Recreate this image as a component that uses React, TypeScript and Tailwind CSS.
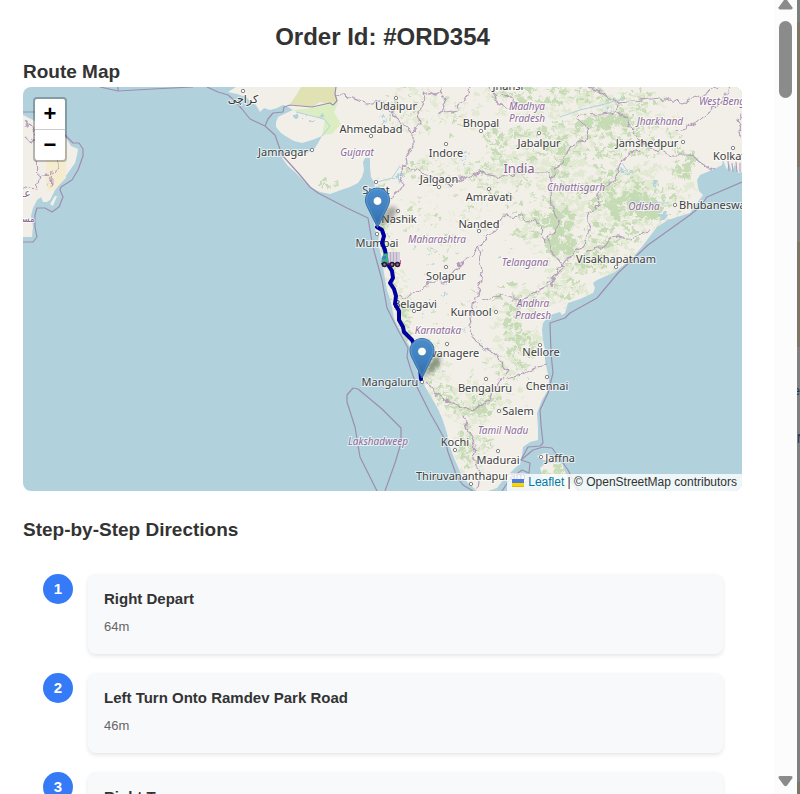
import React from "react";

type Pt = [number, number];
type Anchor = "start" | "middle" | "end";

/* ---------- Map geometry ---------- */

const INDIA =
  "M236 87L228 92L237 94L246 97L250 101L256 105L260 112L264 108L270 110L277 108L283 105L288 107L293 110L284 114L278 117L276 122L276 127L281 133L287 137L294 141L302 143L309 141L315 139L322 136L318 143L315 148L307 153L298 152L290 154L284 155L282 158L288 166L295 172L303 180L310 187L320 192L330 194L341 190L350 187L358 183L362 177L364 170L363 162L365 158L370 158L370 168L371 177L374 182L375 188L371 192L373 200L371 206L373 213L374 222L375 230L379 236L378 243L381 255L383 267L385 279L387 290L390 299L392 307L394 318L398 327L404 337L410 347L414 358L417 370L423 383L430 395L437 407L442 418L445 427L448 437L450 447L454 458L458 467L462 476L467 482L477 491L488 491L497 488L503 480L510 473L515 468L520 464L521 459L522 455L523 447L530 442L538 440L538 428L537 413L542 400L548 390L549 380L547 370L545 360L545 350L543 340L542 330L543 323L550 315L560 312L562 315L565 313L568 303L580 299L593 293L595 288L593 283L597 280L615 272L625 264L633 257L640 249L647 240L657 227L668 220L677 217L690 213L697 203L703 195L699 191L698 187L697 180L700 175L712 170L722 165L723 160L727 170L729 163L732 172L735 164L738 173L742 172L742 87Z";

const OMAN =
  "M23 115L33 120L43 127L58 133L66 138L71 146L78 149L77 155L75 163L70 170L63 180L55 190L50 200L47 202L43 202L41 197L37 200L33 208L31 216L33 226L32 237L23 237Z";

const MARINE = [
  "M100 87L118 91L153 89L193 87",
  "M118 87L118 91",
  "M207 87L218 92L228 95L235 101L242 109L250 119L265 126L275 135L282 155L300 175L310 187L318 193L347 208L368 218L370 230L373 247L377 262L382 280L387 308L398 330L408 348L407 357L411 370L417 387L430 413L438 427L445 440L448 452L452 463L457 477L463 485L473 491",
  "M265 126L268 119L273 113L283 112L284 107L290 105L312 107L330 103L333 105L337 101L335 94L336 87",
  "M742 182L707 197L700 207L690 215L648 245L618 273L597 298L570 313L565 318L550 323L551 353L553 373L548 393L540 410L541 425L543 443L540 446L528 447L521 460L530 463L529 473L522 470L510 479L502 491",
  "M521 460L533 450L543 447L552 448L557 455L563 463L568 470L573 480L579 491",
  "M353 388L347 395L347 402L355 427L360 457L377 491",
  "M353 388L358 389L382 409L401 428L401 443L395 463L385 491",
  "M23 112L36 112L65 135L73 143L79 143L83 149L83 156L78 170L72 180L61 187L60 190L63 197L59 207L52 212L45 208L37 208L35 215L35 227L37 237L33 242L23 242",
];

const STATES = [
  "M335 95L350 97L365 103L380 100L392 113L402 123L413 133L413 145L405 155L407 163L400 168L403 180L400 190L392 197L380 203",
  "M413 133L420 125L418 113L425 100L422 92L430 95L440 90L447 103L440 113L455 110L465 100L470 87",
  "M400 165L420 173L437 178L450 185L465 178L480 172L500 178L520 172L545 172L553 178",
  "M553 178L560 163L570 148L585 140L590 128L578 120L580 114L600 115L617 113L620 103L610 98L600 92L590 87",
  "M617 113L627 118L632 130L640 140L655 150L670 155L690 155L700 162L712 170",
  "M620 103L640 100L660 98L680 102L700 95L720 87",
  "M675 130L685 128L700 120L715 108L725 95L730 87",
  "M742 115L738 118L741 125L737 131L742 137",
  "M640 150L632 152L620 163L615 180L600 190L597 210L585 213L590 230L585 245L570 255L558 270L550 285",
  "M553 178L550 195L555 215L560 225L548 238L552 252L565 268",
  "M490 237L503 215L520 217L540 225L545 240",
  "M585 253L600 248L618 235L632 238L648 232",
  "M400 297L415 293L430 282L445 283L455 270L465 260L478 248L490 237",
  "M478 250L482 280L475 300L470 315L472 335L480 345L495 355L508 370L500 380",
  "M482 300L500 295L520 300L540 290L550 280L565 268",
  "M500 380L508 378L520 375L535 368L547 365",
  "M425 383L440 395L455 405L475 410L490 400L500 380",
  "M463 415L468 430L475 445L473 460L480 475L478 490",
  "M500 97L510 95L516 105L508 110L496 100L490 87",
  "M23 122L33 128L36 137L31 143L25 136M36 137L40 125M37 137L39 178L36 188L23 185M39 178L47 176L51 182L50 187M59 150L59 168L52 171L50 187",
];

/* [centre x, centre y, radius x, radius y, number of patches, patch size] */
const WOODS: number[][] = [
  [382, 190, 8, 14, 14, 3],
  [385, 240, 5, 24, 22, 3],
  [393, 290, 5, 24, 22, 3],
  [404, 325, 7, 20, 34, 4],
  [427, 364, 12, 20, 46, 5],
  [445, 396, 10, 12, 26, 4],
  [465, 408, 18, 9, 40, 4],
  [486, 404, 13, 14, 36, 4],
  [466, 446, 6, 22, 36, 4],
  [484, 445, 12, 10, 26, 3],
  [328, 184, 9, 5, 12, 4],
  [400, 105, 16, 24, 26, 3],
  [440, 120, 26, 24, 22, 3],
  [450, 170, 48, 14, 50, 3],
  [500, 180, 34, 20, 50, 3],
  [520, 145, 46, 18, 74, 4],
  [550, 95, 60, 10, 64, 5],
  [605, 121, 27, 7, 62, 6],
  [560, 140, 26, 18, 50, 4],
  [600, 150, 22, 18, 40, 4],
  [562, 165, 9, 30, 40, 5],
  [560, 230, 15, 27, 96, 6],
  [530, 215, 30, 24, 46, 4],
  [596, 195, 18, 15, 42, 4],
  [634, 209, 26, 17, 110, 6],
  [622, 180, 24, 14, 40, 4],
  [610, 235, 30, 15, 60, 4],
  [655, 205, 30, 24, 70, 4],
  [685, 166, 11, 16, 40, 5],
  [650, 142, 34, 18, 60, 4],
  [630, 100, 32, 12, 40, 4],
  [585, 262, 22, 13, 46, 4],
  [558, 288, 24, 12, 30, 4],
  [513, 328, 8, 28, 58, 4],
  [524, 350, 14, 20, 40, 4],
  [520, 295, 26, 12, 24, 4],
  [500, 372, 34, 18, 30, 3],
  [440, 225, 40, 34, 32, 3],
  [455, 300, 50, 50, 30, 2],
  [555, 480, 16, 14, 40, 4],
];

/* Pale scrub that surrounds the denser woods. */
const SCRUB: number[][] = [
  [530, 110, 75, 26, 150, 5],
  [480, 172, 80, 20, 150, 4],
  [540, 160, 50, 34, 130, 5],
  [620, 120, 70, 30, 150, 5],
  [600, 180, 60, 40, 190, 5],
  [650, 200, 50, 34, 150, 5],
  [565, 235, 50, 44, 190, 5],
  [600, 255, 36, 22, 90, 5],
  [515, 330, 26, 46, 150, 5],
  [560, 295, 38, 14, 70, 5],
  [385, 240, 9, 50, 60, 4],
  [400, 310, 11, 40, 70, 4],
  [430, 370, 20, 28, 90, 5],
  [470, 405, 36, 18, 110, 4],
  [473, 448, 18, 34, 100, 4],
  [415, 110, 34, 26, 90, 4],
  [445, 215, 50, 30, 90, 3],
  [500, 385, 36, 30, 70, 4],
  [558, 478, 20, 14, 40, 4],
];

const WATER: number[][] = [
  [384, 116, 5, 9, 6, 3],
  [465, 156, 6, 10, 8, 3],
  [398, 178, 7, 5, 8, 3],
  [312, 118, 20, 4, 8, 3],
  [605, 110, 8, 4, 6, 3],
  [627, 171, 6, 4, 7, 3],
  [656, 185, 4, 3, 6, 3],
  [427, 252, 16, 14, 9, 2],
  [505, 250, 40, 30, 12, 2],
  [455, 300, 40, 30, 14, 2],
  [480, 345, 50, 40, 12, 2],
  [663, 216, 5, 3, 7, 4],
];

/* Small deterministic generator so that the terrain is the same on each load. */
function makeRandom(seed: number) {
  let s = seed;
  return () => {
    s = (s * 16807) % 2147483647;
    return s / 2147483647;
  };
}

function scatter(clusters: number[][], seed: number): string {
  const rnd = makeRandom(seed);
  let d = "";
  for (const [cx, cy, rx, ry, count, size] of clusters) {
    for (let i = 0; i < count; i++) {
      const a = rnd() * Math.PI * 2;
      const r = Math.sqrt(rnd());
      const x = cx + Math.cos(a) * r * rx;
      const y = cy + Math.sin(a) * r * ry;
      const w = size * (0.3 + rnd() * 0.8);
      const pts: Pt[] = [];
      for (let k = 0; k < 6; k++) {
        const t = (k / 6) * Math.PI * 2;
        const q = w * (0.3 + rnd() * 0.8);
        pts.push([x + Math.cos(t) * q, y + Math.sin(t) * q * 0.7]);
      }
      d += "M" + pts.map((p) => p[0].toFixed(1) + " " + p[1].toFixed(1)).join("L") + "Z";
    }
  }
  return d;
}

const WOODS_PATH = scatter(WOODS, 4217);
const SCRUB_PATH = scatter(SCRUB, 5501);
const WATER_PATH = scatter(WATER, 911);

/* ---------- Map labels ---------- */

const CITIES: { t: string; x: number; y: number; a?: Anchor; dot?: Pt }[] = [
  { t: "Udaipur", x: 396, y: 110, dot: [396, 98] },
  { t: "Ahmedabad", x: 371, y: 133, dot: [371, 136] },
  { t: "Jamnagar", x: 283, y: 156, dot: [312, 150] },
  { t: "Bhopal", x: 481, y: 127, dot: [481, 131] },
  { t: "Indore", x: 446, y: 157, dot: [446, 144] },
  { t: "Jalgaon", x: 439, y: 183, dot: [439, 187] },
  { t: "Jhansi", x: 508, y: 90 },
  { t: "Jabalpur", x: 539, y: 147, dot: [539, 133] },
  { t: "Jamshedpur", x: 647, y: 147, dot: [683, 142] },
  { t: "Kolkata", x: 713, y: 160, a: "start", dot: [733, 148] },
  { t: "Amravati", x: 489, y: 201, dot: [489, 189] },
  { t: "Surat", x: 376, y: 194, dot: [376, 182] },
  { t: "Nashik", x: 399, y: 223, dot: [398, 211] },
  { t: "Nanded", x: 479, y: 228, dot: [479, 231] },
  { t: "Mumbai", x: 377, y: 247, dot: [377, 234] },
  { t: "Solapur", x: 446, y: 280, dot: [446, 267] },
  { t: "Belagavi", x: 415, y: 308, dot: [414, 311] },
  { t: "Kurnool", x: 471, y: 316, dot: [496, 312] },
  { t: "Davanagere", x: 448, y: 357, dot: [447, 344] },
  { t: "Mangaluru", x: 390, y: 386, dot: [422, 382] },
  { t: "Bengaluru", x: 485, y: 392, dot: [486, 379] },
  { t: "Nellore", x: 541, y: 356, dot: [540, 345] },
  { t: "Chennai", x: 547, y: 390, dot: [547, 377] },
  { t: "Salem", x: 518, y: 415, dot: [499, 411] },
  { t: "Kochi", x: 455, y: 446, dot: [455, 450] },
  { t: "Madurai", x: 498, y: 464, dot: [498, 451] },
  { t: "Jaffna", x: 560, y: 462, dot: [541, 457] },
  { t: "Thiruvananthapuram", x: 416, y: 480, a: "start", dot: [471, 484] },
  { t: "Visakhapatnam", x: 616, y: 263, dot: [616, 267] },
  { t: "Bhubaneswar", x: 679, y: 209, a: "start", dot: [675, 205] },
];

const REGIONS: { t: string; x: number; y: number; a?: Anchor }[] = [
  { t: "Gujarat", x: 357, y: 156 },
  { t: "Madhya", x: 527, y: 110 },
  { t: "Pradesh", x: 527, y: 122 },
  { t: "Jharkhand", x: 660, y: 125 },
  { t: "West Bengal", x: 699, y: 105, a: "start" },
  { t: "Chhattisgarh", x: 576, y: 191 },
  { t: "Odisha", x: 644, y: 210 },
  { t: "Maharashtra", x: 437, y: 243 },
  { t: "Telangana", x: 525, y: 266 },
  { t: "Andhra", x: 533, y: 307 },
  { t: "Pradesh", x: 533, y: 319 },
  { t: "Karnataka", x: 438, y: 334 },
  { t: "Tamil Nadu", x: 503, y: 434 },
  { t: "Lakshadweep", x: 378, y: 445 },
];

function Marker({ x, y }: { x: number; y: number }) {
  return (
    <g transform={`translate(${x - 12.5} ${y - 41})`}>
      <path d="M13 41L20 24Q26 17 31 20Q33 25 27 31Z" fill="#000" opacity="0.3" filter="url(#soft)" />
      <path
        d="M12.5 0.5C5.8 0.5 0.5 5.8 0.5 12.4C0.5 15.3 1.4 17.6 2.7 20.2L12.5 40L22.3 20.2C23.6 17.6 24.5 15.3 24.5 12.4C24.5 5.8 19.2 0.5 12.5 0.5Z"
        fill="url(#pin)"
        stroke="#3573a8"
      />
      <path
        d="M12.5 1.6C6.4 1.6 1.6 6.4 1.6 12.4C1.6 15.1 2.4 17.2 3.7 19.7L12.5 37.6L21.3 19.7C22.6 17.2 23.4 15.1 23.4 12.4C23.4 6.4 18.6 1.6 12.5 1.6Z"
        fill="none"
        stroke="#fff"
        strokeOpacity="0.14"
      />
      <circle cx="12.5" cy="13.5" r="4.3" fill="#fff" stroke="#2e6c97" strokeWidth="0.6" />
    </g>
  );
}

function Truck() {
  return (
    <g>
      <rect x="388.500" y="252" width="11.500" height="11" fill="#d6cedd" />
      <path d="M390.500 252V263M393.500 252V263M396.500 252V263" stroke="#b9aec6" />
      <path d="M383 255L384.500 253.500H388V263H381.500V259Z" fill="#3fae86" />
      <path d="M383 256H386V259H382Z" fill="#3f7fd0" />
      <path d="M381 263H400V264.500H381Z" fill="#53405c" />
      <path d="M400.500 260V264" stroke="#e0559b" />
      <g fill="#8d7b9b" stroke="#2b1733" strokeWidth="1.500">
        <circle cx="384.500" cy="264.500" r="2" />
        <circle cx="392" cy="264.500" r="2" />
        <circle cx="397.500" cy="264.500" r="2" />
      </g>
    </g>
  );
}

function MapCanvas() {
  return (
    <svg
      className="block h-full w-full"
      viewBox="23 87 719 404"
      preserveAspectRatio="xMidYMid slice"
      role="img"
      aria-label="Route map of southern India"
    >
      <defs>
        <linearGradient id="pin" x1="0" y1="0" x2="0" y2="1">
          <stop offset="0" stopColor="#4a8dcb" />
          <stop offset="0.5" stopColor="#4181c1" />
          <stop offset="1" stopColor="#3069a8" />
        </linearGradient>
        <filter id="soft" x="-30%" y="-30%" width="160%" height="160%">
          <feGaussianBlur stdDeviation="2" />
        </filter>
        <filter id="rough" filterUnits="userSpaceOnUse" x="23" y="87" width="719" height="404">
          <feTurbulence type="fractalNoise" baseFrequency="0.22" numOctaves="2" seed="7" result="noise" />
          <feDisplacementMap
            in="SourceGraphic"
            in2="noise"
            scale="8"
            xChannelSelector="R"
            yChannelSelector="G"
            result="ragged"
          />
          <feGaussianBlur in="ragged" stdDeviation="0.500" />
        </filter>
        <filter id="wobble" filterUnits="userSpaceOnUse" x="23" y="87" width="719" height="404">
          <feTurbulence type="fractalNoise" baseFrequency="0.12" numOctaves="2" seed="3" result="noise" />
          <feDisplacementMap
            in="SourceGraphic"
            in2="noise"
            scale="9"
            xChannelSelector="R"
            yChannelSelector="G"
            result="bent"
          />
          <feGaussianBlur in="bent" stdDeviation="0.350" />
        </filter>
        <clipPath id="land">
          <path d={INDIA} />
          <path d="M540 491L544 480L540 468L546 463L562 463L568 480L577 491Z" />
        </clipPath>
      </defs>

      <rect x="23" y="87" width="719" height="404" fill="#b1d2dd" />

      <g fill="#f2efe9">
        <path d={INDIA} />
        <path d={OMAN} />
        <path d="M540 491L544 480L540 468L546 463L562 463L568 480L577 491Z" />
        <path d="M537 456L544 453L551 456L556 461L548 461L540 459Z" />
        <path d="M50 204L55 196L57 196L53 206Z" />
      </g>
      <path d="M46 152L66 152L66 178L55 189L48 192L46 180Z" fill="#f5ecd0" />

      <g clipPath="url(#land)">
        <path d="M290 104L297 94L301 87H336L335 93L338 101L328 104L320 102L312 107Z" fill="#e0e2b3" />
        <path
          d="M293 110L312 108L330 104L338 103L334 112L341 124L332 134L322 135L325 120L308 114L298 113Z"
          fill="#daeec2"
        />
        <g filter="url(#rough)">
          <path d={SCRUB_PATH} fill="#dbe7cb" opacity="0.7" />
          <path d={WOODS_PATH} fill="#c0d8ae" opacity="0.85" />
          <path d={WATER_PATH} fill="#b1d2dd" />
        </g>
        <path
          d="M322 136L330 126L324 119L308 115L296 112M560 117L580 110L605 104L625 98M400 166L392 178L374 183M630 200L650 203L668 203M628 172L622 163"
          fill="none"
          stroke="#b1d2dd"
        />
      </g>

      <g fill="none" stroke="#b39dba" strokeWidth="1.200" filter="url(#wobble)">
        {STATES.map((d) => (
          <path key={d} d={d} />
        ))}
      </g>
      <g fill="none" stroke="#9c8fae" strokeWidth="1.200" strokeLinejoin="round">
        {MARINE.map((d) => (
          <path key={d} d={d} />
        ))}
      </g>
      <path d="M728 161L729 171M732 163L733 172M736 162L737 172M740 163V172" stroke="#a99ab8" />

      <g fill="#fff" stroke="#777" strokeWidth="0.900">
        {CITIES.filter((c) => c.dot).map((c) => (
          <circle key={c.t} cx={c.dot![0]} cy={c.dot![1]} r="1.700" />
        ))}
        <circle cx="243" cy="91" r="1.700" />
      </g>

      <g
        className="font-['Noto_Sans',sans-serif] text-[11px]"
        fill="#404040"
        stroke="#fff"
        strokeOpacity="0.65"
        strokeWidth="2"
        paintOrder="stroke"
      >
        {CITIES.map((c) => (
          <text key={c.t} x={c.x} y={c.y} textAnchor={c.a ?? "middle"}>
            {c.t}
          </text>
        ))}
      </g>
      <g
        className="font-['Noto_Sans',sans-serif] text-[10px] italic"
        fill="#8d6a9b"
        stroke="#fff"
        strokeOpacity="0.65"
        strokeWidth="2"
        paintOrder="stroke"
      >
        {REGIONS.map((r) => (
          <text key={r.t + r.x} x={r.x} y={r.y} textAnchor={r.a ?? "middle"}>
            {r.t}
          </text>
        ))}
      </g>
      <g stroke="#fff" strokeOpacity="0.65" strokeWidth="2" paintOrder="stroke" textAnchor="middle">
        <text x="519" y="173" fill="#84618f" className="font-['Noto_Sans',sans-serif] text-[13px]">
          India
        </text>
        <text x="243" y="103" fill="#333" className="font-['DejaVu_Sans',sans-serif] text-[11px]">
          کراچی
        </text>
        <text x="26" y="197" fill="#84618f" className="font-['DejaVu_Sans',sans-serif] text-[11px]">
          عـ
        </text>
        <text x="27" y="222" fill="#84618f" className="font-['DejaVu_Sans',sans-serif] text-[9px]">
          مسـ
        </text>
      </g>

      <path
        d="M377 227L382 230L384 236L382 243L385 250L387 263L392 271L393 278L390 283L394 289L396 296L395 304L399 311L399 320L403 327L404 332L412 340L418 352L420 367L421 379"
        fill="none"
        stroke="#00009f"
        strokeWidth="4"
        strokeLinejoin="round"
        strokeLinecap="round"
      />
      <Marker x={377.5} y={228.5} />
      <Marker x={422} y={379} />
      <Truck />
    </svg>
  );
}

function RouteMap() {
  return (
    <div className="relative h-[404px] overflow-hidden rounded-lg">
      <MapCanvas />
      <div className="absolute top-2.5 left-2.5 flex flex-col overflow-hidden rounded-sm border-2 border-black/25 bg-white bg-clip-padding">
        <button
          type="button"
          aria-label="Zoom in"
          className="flex h-[31px] w-[30px] items-center justify-center border-b border-[#ccc] text-[22px] leading-[30px] font-bold text-black"
        >
          +
        </button>
        <button
          type="button"
          aria-label="Zoom out"
          className="flex h-[30px] w-[30px] items-center justify-center text-[22px] leading-[30px] font-bold text-black"
        >
          −
        </button>
      </div>
      <div className="absolute right-0 bottom-0 flex items-center bg-white/80 px-[5px] text-[12px] leading-[17px] text-[#333]">
        <a href="#leaflet" className="flex items-center gap-1 text-[#0078a8]">
          <svg width="12" height="8" viewBox="0 0 12 8" aria-hidden="true">
            <path fill="#4c7be1" d="M0 0h12v4H0z" />
            <path fill="#ffd500" d="M0 4h12v3H0z" />
            <path fill="#e0bc00" d="M0 7h12v1H0z" />
          </svg>
          Leaflet
        </a>
        <span className="whitespace-pre"> | © OpenStreetMap contributors</span>
      </div>
    </div>
  );
}

const STEPS = [
  { title: "Right Depart", distance: "64m" },
  { title: "Left Turn Onto Ramdev Park Road", distance: "46m" },
  { title: "Right Turn", distance: "120m" },
];

function Directions() {
  return (
    <ol className="mt-[33px] flex flex-col gap-[19px] pr-[19px] pl-5">
      {STEPS.map((step, i) => (
        <li key={step.title} className="flex items-start gap-[15px]">
          <span className="flex size-[30px] shrink-0 items-center justify-center rounded-full bg-[#357af6] text-[15px] leading-5 font-bold text-white">
            {i + 1}
          </span>
          <div className="flex-1 rounded-lg bg-[#f8f9fb] px-4 pt-[15px] pb-[17px] shadow-[0_2px_4px_rgba(0,0,0,0.1)]">
            <h3 className="text-[15px] leading-5 font-bold text-[#333]">{step.title}</h3>
            <p className="mt-2 text-[13px] leading-5 text-[#666]">{step.distance}</p>
          </div>
        </li>
      ))}
    </ol>
  );
}

function ScrollRail() {
  return (
    <div className="flex w-[23px] shrink-0 flex-col items-center bg-[#fcfcfc]" aria-hidden="true">
      <svg width="15" height="10" viewBox="0 0 15 10">
        <path d="M6 0H9L14.500 7.500Q15 9.500 13 9.500H2Q0 9.500 0.500 7.500Z" fill="#8b8b8b" />
      </svg>
      <div className="mt-[11px] h-[77px] w-[13px] rounded-full bg-[#8b8b8b]" />
      <svg className="mt-auto mb-[7px]" width="15" height="11" viewBox="0 0 15 11">
        <path d="M2 0H13Q15 0 14.500 2L9 9.500Q7.500 11 6 9.500L0.500 2Q0 0 2 0Z" fill="#8b8b8b" />
      </svg>
    </div>
  );
}

function PageBehind() {
  return (
    <div className="flex w-[3px] shrink-0 flex-col overflow-hidden bg-[#808080]" aria-hidden="true">
      <div className="h-[22px] bg-[#7b7f80]" />
      <div className="h-[145px] bg-[#7d7565]" />
      <div className="h-[75px] bg-[#7f8081]" />
      <div className="h-[105px] bg-[#7d7565]" />
      <div className="flex flex-1 flex-col pt-9 text-[12px] leading-4 text-[#1c3356]">
        <span className="flex h-12 justify-end">e</span>
        <span className="h-6">N</span>
      </div>
      <div className="h-3 bg-[#7d7565]" />
    </div>
  );
}

export default function App() {
  return (
    <div className="flex h-screen overflow-hidden bg-white font-['Liberation_Sans',Arial,sans-serif] text-[#333]">
      <main className="min-w-0 flex-1 overflow-hidden pt-[23px] pr-8 pl-[23px]">
        <h1 className="text-center text-[24px] leading-7 font-bold">Order Id: #ORD354</h1>
        <h2 className="mt-2.5 mb-1 text-[19px] leading-[22px] font-bold">Route Map</h2>
        <RouteMap />
        <h2 className="mt-7 text-[19px] leading-[22px] font-bold">Step-by-Step Directions</h2>
        <Directions />
      </main>
      <ScrollRail />
      <PageBehind />
    </div>
  );
}
